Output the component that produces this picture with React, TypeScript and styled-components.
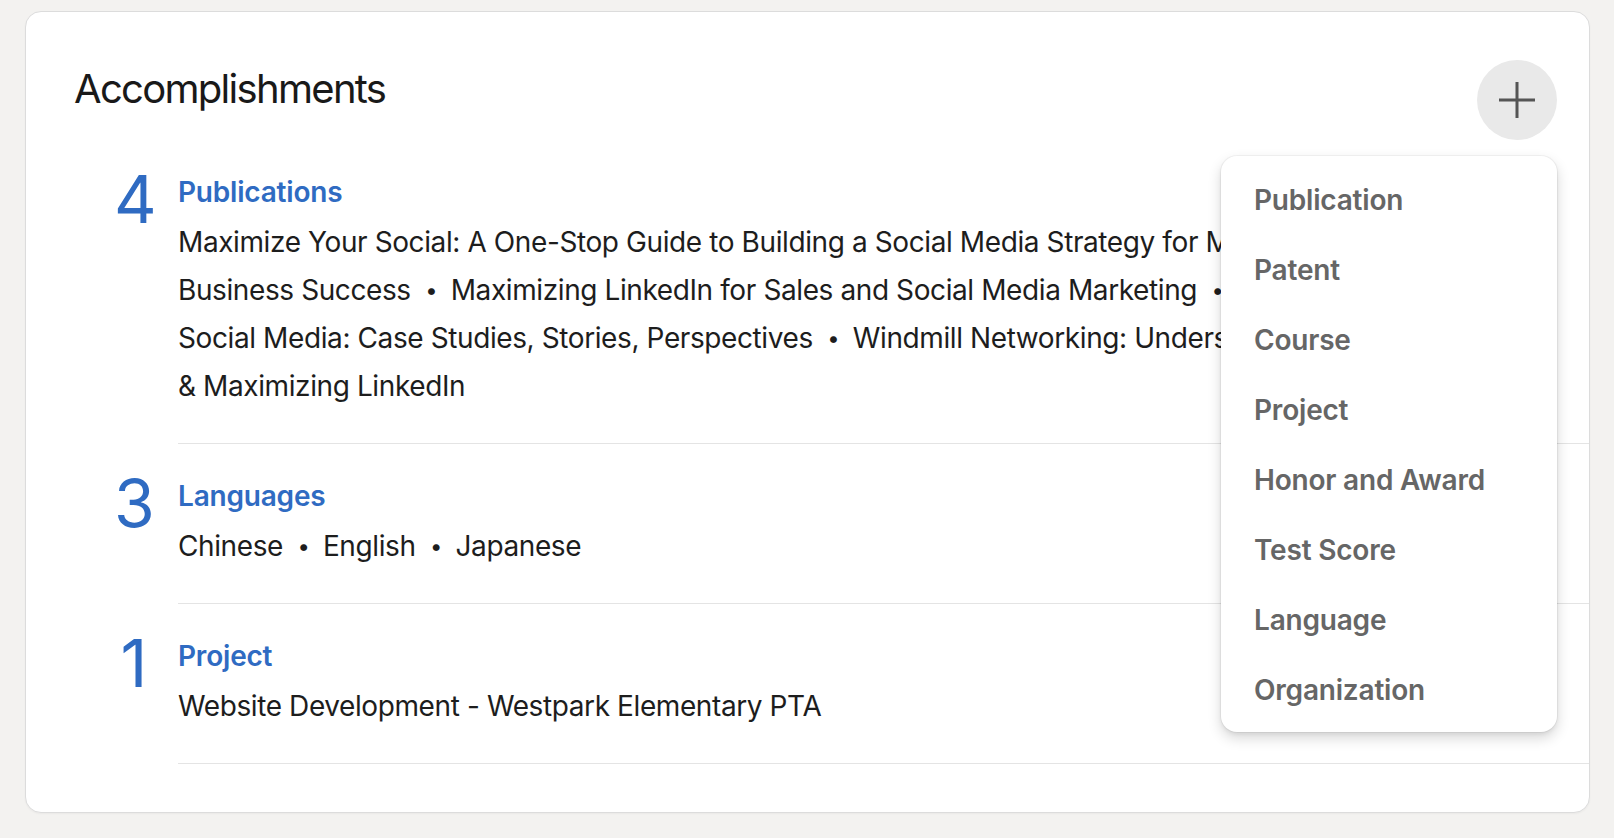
import React from 'react';
import styled, { createGlobalStyle } from 'styled-components';

const GlobalStyle = createGlobalStyle`
  * { box-sizing: border-box; }
  html, body {
    margin: 0;
    padding: 0;
    background: #f3f2f0;
  }
  body {
    font-family: Inter, "Noto Sans", "Liberation Sans", sans-serif;
    color: #1d1d1d;
    -webkit-font-smoothing: antialiased;
  }
`;

const Page = styled.div`
  padding: 11px 24px 26px 25px;
  min-height: 838px;
`;

const Card = styled.section`
  background: #fff;
  border: 1px solid #dcdcdc;
  border-radius: 16px;
  padding: 48px 0 48px 48px;
  box-shadow: 0 1px 2px rgba(0, 0, 0, 0.04);
`;

const Header = styled.header`
  display: flex;
  justify-content: space-between;
  align-items: flex-start;
  padding-right: 32px;
`;

const Title = styled.h2`
  margin: 0;
  font-size: 40px;
  line-height: 58px;
  font-weight: 400;
  color: #191919;
  letter-spacing: -1.7px;
`;

const AddWrap = styled.div`
  position: relative;
`;

const AddButton = styled.button`
  width: 80px;
  height: 80px;
  border: none;
  border-radius: 50%;
  background: #e9e9e9;
  display: flex;
  align-items: center;
  justify-content: center;
  cursor: pointer;
  padding: 0;
`;

const Menu = styled.ul`
  position: absolute;
  top: calc(100% + 16px);
  right: 0;
  width: 336px;
  margin: 0;
  padding: 9px 0 7px;
  list-style: none;
  background: #fff;
  border-radius: 16px;
  box-shadow: 0 0 0 1px rgba(0, 0, 0, 0.04), 0 6px 14px rgba(0, 0, 0, 0.16), 0 2px 4px rgba(0, 0, 0, 0.06);
  z-index: 10;
`;

const MenuItem = styled.li`
  height: 70px;
  display: flex;
  align-items: center;
  padding-left: 33px;
  font-size: 28px;
  font-weight: 600;
  color: #666;
  letter-spacing: -0.2px;
  cursor: pointer;
`;

const List = styled.div`
  margin-left: 40px;
`;

const Row = styled.div`
  display: flex;
  align-items: flex-start;
`;

const Count = styled.div`
  width: 40px;
  margin: 28px 24px 0 0;
  text-align: center;
  font-size: 66px;
  line-height: 62px;
  font-weight: 400;
  color: #2f6bc2;
`;

const Body = styled.div`
  flex: 1;
  padding: 28px 100px 33px 0;
  border-bottom: 1px solid #e4e4e4;
`;

const Heading = styled.a`
  display: block;
  margin-bottom: 2px;
  font-size: 28px;
  line-height: 48px;
  font-weight: 600;
  color: #2f6bc2;
  text-decoration: none;
  letter-spacing: -0.2px;
`;

const Items = styled.p`
  margin: 0;
  font-size: 28px;
  line-height: 48px;
  color: #1d1d1d;
  letter-spacing: -0.4px;
`;

const Sep = styled.span`
  position: relative;
  top: -2px;
  padding: 0 6px 0 7px;
  font-size: 22px;
  line-height: 1;
`;

interface Section {
  title: string;
  items: string[];
}

const sections: Section[] = [
  {
    title: 'Publications',
    items: [
      'Maximize Your Social: A One-Stop Guide to Building a Social Media Strategy for Marketing and Business Success',
      'Maximizing LinkedIn for Sales and Social Media Marketing',
      'Tech Industry Social Media: Case Studies, Stories, Perspectives',
      'Windmill Networking: Understanding, Leveraging & Maximizing LinkedIn',
    ],
  },
  { title: 'Languages', items: ['Chinese', 'English', 'Japanese'] },
  { title: 'Project', items: ['Website Development - Westpark Elementary PTA'] },
];

const menuOptions = [
  'Publication',
  'Patent',
  'Course',
  'Project',
  'Honor and Award',
  'Test Score',
  'Language',
  'Organization',
];

const PlusIcon = () => (
  <svg width="36" height="36" viewBox="0 0 36 36" aria-hidden="true">
    <path d="M18 0v36M0 18h36" stroke="#555" strokeWidth="3" fill="none" />
  </svg>
);

const App: React.FC = () => {
  return (
    <>
      <GlobalStyle />
      <Page>
        <Card>
          <Header>
            <Title>Accomplishments</Title>
            <AddWrap>
              <AddButton aria-label="Add accomplishment">
                <PlusIcon />
              </AddButton>
              <Menu>
                {menuOptions.map((opt) => (
                  <MenuItem key={opt}>{opt}</MenuItem>
                ))}
              </Menu>
            </AddWrap>
          </Header>

          <List>
            {sections.map((section) => (
              <Row key={section.title}>
                <Count>{section.items.length}</Count>
                <Body>
                  <Heading href="#">{section.title}</Heading>
                  <Items>
                    {section.items.map((item, i) => (
                      <React.Fragment key={item}>
                        {i > 0 && (
                          <>
                            {' '}
                            <Sep>•</Sep>{' '}
                          </>
                        )}
                        {item}
                      </React.Fragment>
                    ))}
                  </Items>
                </Body>
              </Row>
            ))}
          </List>
        </Card>
      </Page>
    </>
  );
};

export default App;
